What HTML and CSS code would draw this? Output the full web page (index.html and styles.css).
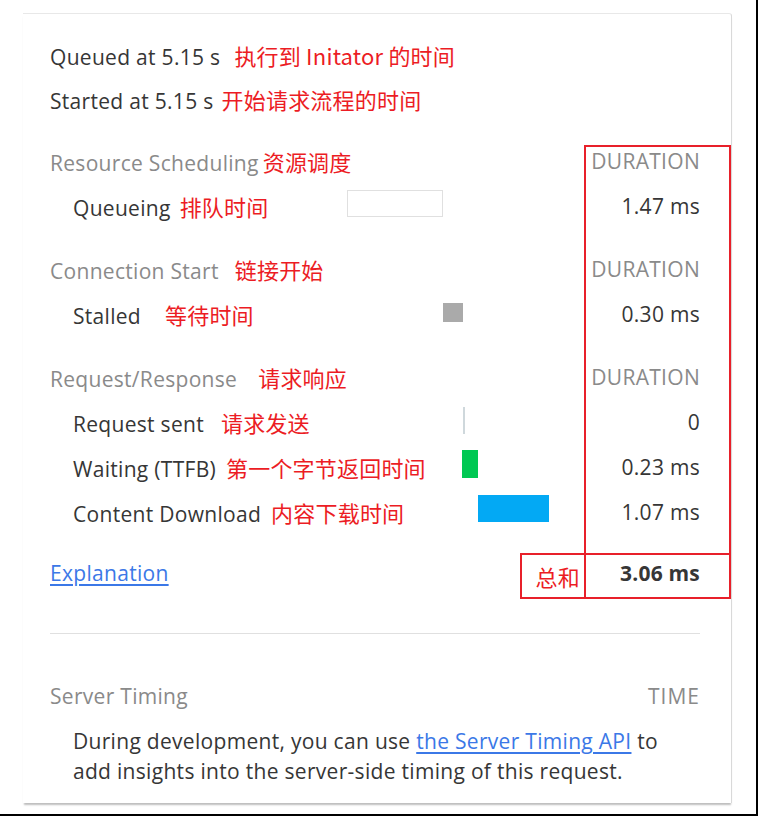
FILE: index.html
```html
<!DOCTYPE html>
<html lang="en">
<head>
<meta charset="utf-8">
<title>Timing</title>
<link rel="stylesheet" href="styles.css">
</head>
<body>
<div class="frame">
  <div class="card">
    <div class="info">
      <div class="line">Queued at 5.15 s<span class="note g14">执行到 Initator 的时间</span></div>
      <div class="line">Started at 5.15 s<span class="note g8">开始请求流程的时间</span></div>
    </div>

    <section class="group">
      <div class="row head">
        <span class="label">Resource Scheduling<span class="note g4">资源调度</span></span>
        <span class="timeline"></span>
        <span class="dur">DURATION</span>
      </div>
      <div class="row item">
        <span class="label">Queueing<span class="note g9">排队时间</span></span>
        <span class="timeline"><span class="bar queue" style="left:0;width:96px"></span></span>
        <span class="dur">1.47 ms</span>
      </div>
    </section>

    <section class="group">
      <div class="row head">
        <span class="label">Connection Start<span class="note g16">链接开始</span></span>
        <span class="timeline"></span>
        <span class="dur">DURATION</span>
      </div>
      <div class="row item">
        <span class="label">Stalled<span class="note g24">等待时间</span></span>
        <span class="timeline"><span class="bar stalled" style="left:96px;width:20px"></span></span>
        <span class="dur">0.30 ms</span>
      </div>
    </section>

    <section class="group">
      <div class="row head">
        <span class="label">Request/Response<span class="note g21">请求响应</span></span>
        <span class="timeline"></span>
        <span class="dur">DURATION</span>
      </div>
      <div class="row item">
        <span class="label">Request sent<span class="note g17">请求发送</span></span>
        <span class="timeline"><span class="bar sent" style="left:116px;width:2px"></span></span>
        <span class="dur">0</span>
      </div>
      <div class="row item">
        <span class="label">Waiting (TTFB)<span class="note g10">第一个字节返回时间</span></span>
        <span class="timeline"><span class="bar waiting" style="left:115px;width:16px"></span></span>
        <span class="dur">0.23 ms</span>
      </div>
      <div class="row item">
        <span class="label">Content Download<span class="note g10">内容下载时间</span></span>
        <span class="timeline"><span class="bar download" style="left:131px;width:71px"></span></span>
        <span class="dur">1.07 ms</span>
      </div>
    </section>

    <div class="row total">
      <span class="label"><a class="link" href="#">Explanation</a></span>
      <span class="timeline"></span>
      <span class="dur strong">3.06 ms</span>
    </div>

    <div class="sep"></div>

    <div class="row head server">
      <span class="label">Server Timing</span>
      <span class="timeline"></span>
      <span class="dur wide">TIME</span>
    </div>
    <p class="desc">During development, you can use <a class="link" href="#">the Server Timing API</a> to<br>add insights into the server-side timing of this request.</p>

    <div class="mark col-mark"></div>
    <div class="mark sum-mark"><span class="sum-label">总和</span></div>
  </div>
</div>
</body>
</html>
```

FILE: styles.css
```css
* {
  box-sizing: border-box;
}

html,
body {
  margin: 0;
  background: #ffffff;
}

body {
  font-family: "Open Sans", "Noto Sans", sans-serif;
  font-size: 21px;
  letter-spacing: 0.3px;
  color: #363636;
}

.frame {
  width: 758px;
  height: 816px;
  border-right: 2px solid #000000;
  border-bottom: 2px solid #000000;
  padding: 13px 0 0 23px;
  overflow: hidden;
}

.card {
  position: relative;
  width: 709px;
  height: 790px;
  border-top: 1px solid #e8e8e8;
  border-right: 1px solid #d9d9d9;
  border-top-right-radius: 3px;
  box-shadow: 0 3px 2px -1px #bdbdbd;
  padding: 19px 31px 0 27px;
  background: #ffffff;
}

.info .line {
  height: 44px;
  line-height: 44px;
  white-space: nowrap;
}

.note {
  font-family: "Noto Sans CJK SC", "Noto Sans", sans-serif;
  font-size: 22px;
  letter-spacing: 0.2px;
  color: #ec1c24;
}

.g4 { margin-left: 4px; }
.g8 { margin-left: 8px; }
.g9 { margin-left: 9px; }
.g10 { margin-left: 10px; }
.g14 { margin-left: 14px; }
.g16 { margin-left: 16px; }
.g17 { margin-left: 17px; }
.g21 { margin-left: 21px; }
.g24 { margin-left: 24px; }

.group {
  margin-top: 18px;
}

.row {
  display: grid;
  grid-template-columns: 297px 228px 125px;
  height: 45px;
  line-height: 45px;
}

.label {
  white-space: nowrap;
}

.item .label {
  padding-left: 23px;
}

.head {
  color: #8a8a8a;
}

.timeline {
  position: relative;
}

.dur {
  text-align: right;
  white-space: nowrap;
}

.wide {
  letter-spacing: 1px;
}

.strong {
  font-weight: 700;
  letter-spacing: 0.2px;
}

.bar {
  position: absolute;
  top: 5px;
  height: 27px;
}

.queue {
  top: 6px;
  background: #ffffff;
  border: 1px solid #e0e0e0;
}

.stalled {
  top: 11px;
  height: 19px;
  background: #aaaaaa;
}

.sent {
  top: 7px;
  background: #cfd8dc;
}

.waiting {
  height: 28px;
  background: #00c853;
}

.download {
  background: #03a9f4;
}

.total {
  margin-top: 16px;
}

.link {
  color: #3b78e7;
  text-decoration: underline;
  text-underline-offset: 3px;
}

.sep {
  height: 1px;
  margin-top: 37px;
  background: #e0e0e0;
}

.server {
  margin-top: 40px;
}

.desc {
  margin: 7px 0 0;
  padding-left: 23px;
  line-height: 30px;
  white-space: nowrap;
}

.mark {
  position: absolute;
  border: 2px solid #e8202a;
}

.col-mark {
  left: 561px;
  top: 131px;
  width: 147px;
  height: 410px;
}

.sum-mark {
  left: 497px;
  top: 539px;
  width: 211px;
  height: 46px;
  display: flex;
}

.sum-label {
  width: 64px;
  border-right: 2px solid #e8202a;
  padding-right: 4px;
  text-align: right;
  font-family: "Noto Sans CJK SC", "Noto Sans", sans-serif;
  font-size: 22px;
  line-height: 42px;
  color: #ec1c24;
}
```
